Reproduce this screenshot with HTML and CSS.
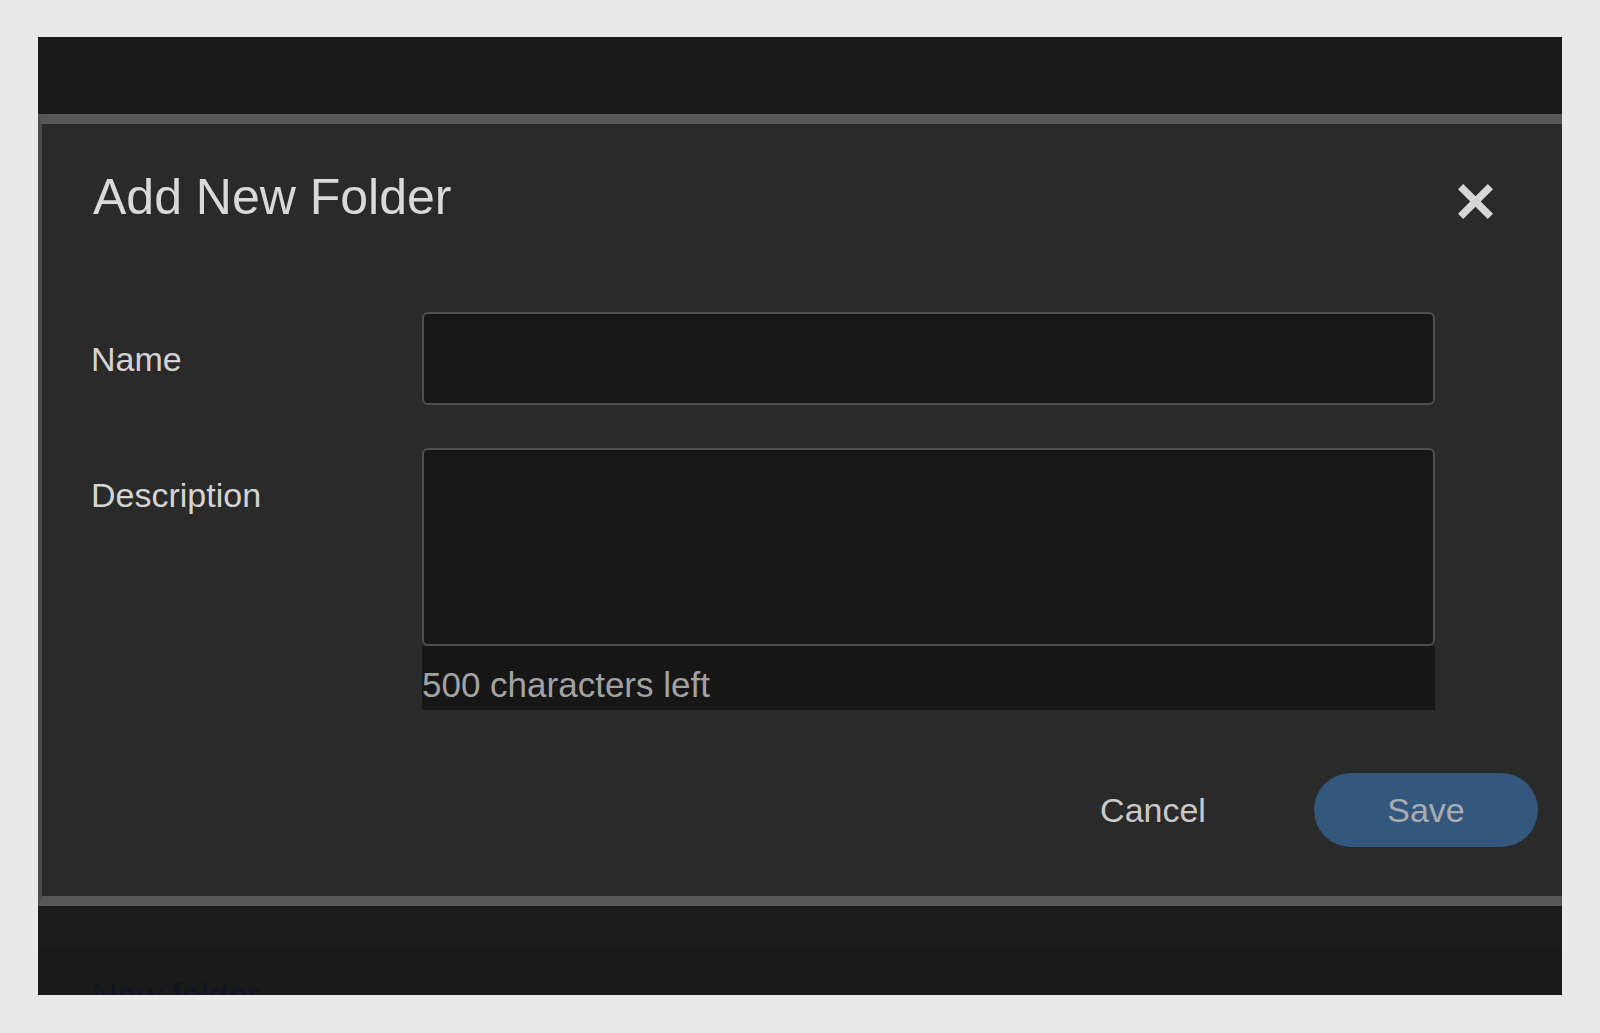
FILE: index.html
```html
<!DOCTYPE html>
<html lang="en">
<head>
<meta charset="utf-8">
<title>Add New Folder</title>
<link rel="stylesheet" href="styles.css">
</head>
<body>
<div class="frame">
  <div class="topbar"></div>
  <section class="dialog">
    <header class="dialog-head">
      <h1 class="dialog-title">Add New Folder</h1>
      <button class="close" aria-label="Close">
        <svg width="37" height="37" viewBox="0 0 37 37">
          <line x1="3.6" y1="3.6" x2="33.4" y2="33.4" stroke="#d6d6d6" stroke-width="7.4"/>
          <line x1="33.4" y1="3.6" x2="3.6" y2="33.4" stroke="#d6d6d6" stroke-width="7.4"/>
        </svg>
      </button>
    </header>
    <div class="form">
      <div class="label">Name</div>
      <div class="field"><div class="input"></div></div>
      <div class="label">Description</div>
      <div class="field">
        <div class="textarea"></div>
        <div class="counter">500 characters left</div>
      </div>
    </div>
    <div class="actions">
      <button class="btn btn-cancel">Cancel</button>
      <button class="btn btn-save">Save</button>
    </div>
  </section>
  <div class="under-head"></div>
  <div class="under-row">New folder</div>
</div>
</body>
</html>
```
FILE: styles.css
```css
html, body {
  margin: 0;
  padding: 0;
}
body {
  background: #e9e9e9;
  padding: 37px 38px 38px 38px;
  font-family: "Liberation Sans", Arial, sans-serif;
}
.frame {
  width: 1524px;
  height: 958px;
  overflow: hidden;
  background: #1a1a1a;
}
.topbar {
  height: 77px;
  background: #1a1a1a;
}
.dialog {
  background: #2a2a2a;
  border-top: 10px solid #575757;
  border-bottom: 10px solid #575757;
  border-left: 4px solid #4c4c4c;
  height: 772px;
  box-sizing: content-box;
}
.dialog-head {
  display: flex;
  justify-content: space-between;
  align-items: flex-start;
  padding: 43px 68px 0 51px;
}
.dialog-title {
  margin: 0;
  font-size: 50px;
  line-height: 60px;
  font-weight: normal;
  color: #d9d9d9;
}
.close {
  margin-top: 16px;
  padding: 0;
  border: 0;
  background: transparent;
  width: 37px;
  height: 37px;
  display: block;
}
.close svg {
  display: block;
}
.form {
  display: grid;
  grid-template-columns: 331px 1013px;
  row-gap: 43px;
  margin-top: 85px;
  padding-left: 49px;
}
.label {
  height: 93px;
  display: flex;
  align-items: center;
  font-size: 34px;
  line-height: 40px;
  color: #d4d4d4;
}
.input {
  height: 93px;
  box-sizing: border-box;
  border: 2px solid #4f4f4f;
  border-radius: 6px;
  background: #171717;
}
.textarea {
  height: 198px;
  box-sizing: border-box;
  border: 2px solid #4f4f4f;
  border-radius: 6px;
  background: #171717;
}
.counter {
  height: 64px;
  box-sizing: border-box;
  padding-top: 14px;
  font-size: 35px;
  line-height: 50px;
  color: #a2a2a2;
  background: #161616;
}
.actions {
  display: flex;
  justify-content: flex-end;
  gap: 49px;
  margin-top: 63px;
  padding-right: 24px;
}
.btn {
  width: 224px;
  height: 74px;
  border: 0;
  padding: 0;
  font-family: "Liberation Sans", Arial, sans-serif;
  font-size: 34px;
  line-height: 74px;
  border-radius: 37px;
}
.btn-cancel {
  background: transparent;
  color: #c9c9c9;
}
.btn-save {
  background: #34577d;
  color: #a9adb2;
}
.under-head {
  height: 45px;
  background: #1b1b1b;
  border-bottom: 1px solid #171717;
}
.under-row {
  padding: 19px 0 0 54px;
  font-size: 35px;
  line-height: 50px;
  color: #0f1621;
}
```
